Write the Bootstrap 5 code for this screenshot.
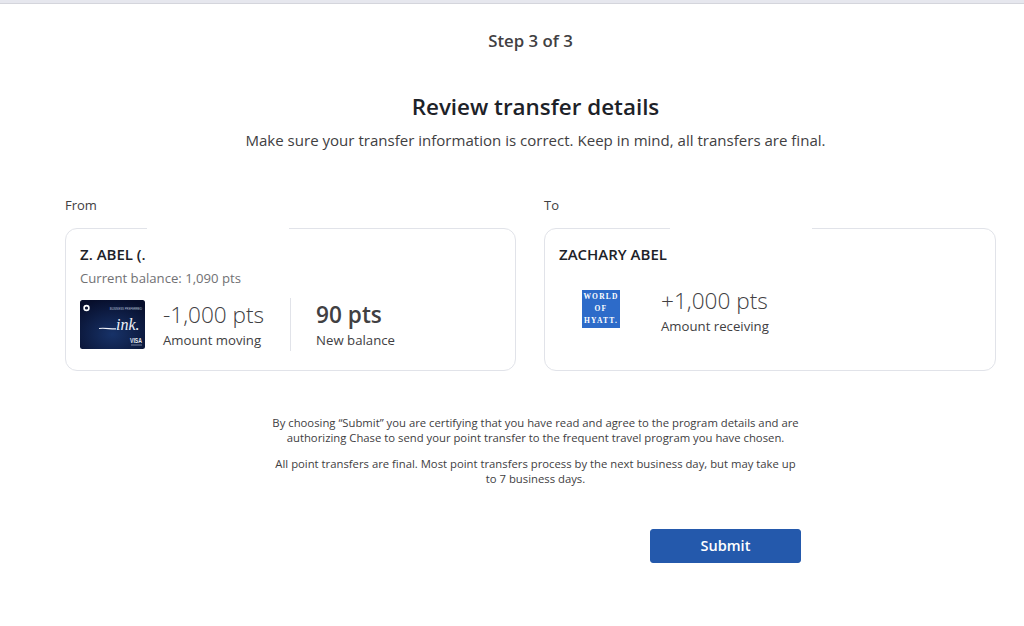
<!DOCTYPE html>
<html lang="en">
<head>
    <meta charset="UTF-8">
    <meta name="viewport" content="width=device-width, initial-scale=1.0">
    <title>Review transfer details</title>
    <link href="https://cdn.jsdelivr.net/npm/bootstrap@5.3.0/dist/css/bootstrap.min.css" rel="stylesheet">
    <style>
        body { font-family: "Open Sans", "Liberation Sans", sans-serif; color: #414042; background: #fff; }
        .top-strip { height: 4px; background: #e6e7ee; border-bottom: 1px solid #d4d5dc; }
        .page-wrap { padding: 26px 28px 0 65px; }
        .step-text { font-size: 16.8px; line-height: 22px; font-weight: 600; }
        .review-title { font-size: 22.4px; line-height: 30px; font-weight: 600; color: #1d2228; margin: 40px 0 0 10px; }
        .review-sub { font-size: 15.05px; line-height: 22px; margin: 7px 0 0 10px; }
        .cards-row { display: grid; grid-template-columns: 451px 452px; column-gap: 28px; margin-top: 45px; }
        .side-label { font-size: 13px; line-height: 18px; margin-bottom: 14px; }
        .transfer-box { position: relative; height: 143px; border: 1px solid #e1e3e9; border-radius: 12px; padding: 15px 14px; }
        .redact-patch { position: absolute; top: -2px; height: 4px; width: 142px; background: #fff; }
        .holder-name { font-size: 15px; line-height: 20px; font-weight: 600; color: #1d2228; }
        .balance-line { font-size: 13.15px; line-height: 18px; color: #717174; margin-top: 5px; }
        .amount-big { font-size: 22.6px; line-height: 30px; font-weight: 300; white-space: nowrap; }
        .amount-bold { font-weight: 600; }
        .amount-note { font-size: 13.2px; line-height: 18px; margin-top: 1px; white-space: nowrap; }
        .card-thumb { width: 65px; height: 49px; display: block; flex: none; }
        .amount-split { width: 1px; height: 53px; background: #e1e3e9; margin: 0 25px 0 26px; }
        .hyatt-logo { width: 38px; height: 38px; background: #2d6bc9; color: #fff; font-family: "Liberation Serif", serif; font-size: 7.5px; line-height: 12px; letter-spacing: 1.2px; font-weight: 700; }
        .receive-amount { margin: 4px 0 0 41px; }
        .legal-block { width: 534px; margin: 44px auto 0; font-size: 11.3px; line-height: 15px; text-align: center; position: relative; left: 5px; }
        .legal-block p { margin: 0 0 11px; }
        .submit-btn { width: 151px; height: 34px; padding: 0; background: #2459ac; border-color: #2459ac; border-radius: 3px; font-size: 14.5px; font-weight: 600; }
        .submit-row { width: 736px; margin-top: 43px; }
    </style>
</head>
<body>
    <div class="top-strip"></div>
    <div class="page-wrap">
        <div class="text-center step-text">Step 3 of 3</div>
        <h1 class="text-center review-title">Review transfer details</h1>
        <p class="text-center review-sub">Make sure your transfer information is correct. Keep in mind, all transfers are final.</p>

        <div class="cards-row">
            <div>
                <div class="side-label">From</div>
                <div class="transfer-box">
                    <div class="redact-patch" style="left: 81px"></div>
                    <div class="holder-name">Z. ABEL (.</div>
                    <div class="balance-line">Current balance: 1,090 pts</div>
                    <div class="d-flex align-items-center" style="margin-top: 11px">
                        <svg class="card-thumb" viewBox="0 0 65 49" role="img" aria-label="Ink business card">
                            <defs>
                                <radialGradient id="inkBg" cx="0.5" cy="0.7" r="0.75">
                                    <stop offset="0" stop-color="#173268"/>
                                    <stop offset="1" stop-color="#070e2b"/>
                                </radialGradient>
                            </defs>
                            <rect width="65" height="49" rx="2.5" fill="url(#inkBg)"/>
                            <circle cx="6.5" cy="8" r="2.4" fill="none" stroke="#fff" stroke-width="1.6"/>
                            <text x="62" y="9.5" text-anchor="end" font-family="Liberation Sans, sans-serif" font-size="2.8" fill="#b9c2d8">BUSINESS PREFERRED</text>
                            <path d="M19 28.5c6-.8 11 .6 17 .4" fill="none" stroke="#f2f4fa" stroke-width="1.1"/>
                            <text x="36" y="30" font-family="Liberation Serif, serif" font-style="italic" font-size="16" fill="#f2f4fa">ink.</text>
                            <text x="62" y="42.5" text-anchor="end" font-family="Liberation Sans, sans-serif" font-size="7" font-weight="700" fill="#e4e8f2" textLength="12" lengthAdjust="spacingAndGlyphs">VISA</text>
                            <path d="M51 45h11" stroke="#8e99b5" stroke-width=".8"/>
                        </svg>
                        <div style="margin-left: 18px">
                            <div class="amount-big">-1,000 pts</div>
                            <div class="amount-note">Amount moving</div>
                        </div>
                        <div class="amount-split"></div>
                        <div>
                            <div class="amount-big amount-bold">90 pts</div>
                            <div class="amount-note">New balance</div>
                        </div>
                    </div>
                </div>
            </div>
            <div>
                <div class="side-label">To</div>
                <div class="transfer-box">
                    <div class="redact-patch" style="left: 125px"></div>
                    <div class="holder-name">ZACHARY ABEL</div>
                    <div class="d-flex align-items-center" style="margin-top: 18px">
                        <div class="hyatt-logo d-flex flex-column align-items-center justify-content-center" style="margin-left: 23px">
                            <span>WORLD</span><span>OF</span><span>HYATT.</span>
                        </div>
                        <div class="receive-amount">
                            <div class="amount-big">+1,000 pts</div>
                            <div class="amount-note">Amount receiving</div>
                        </div>
                    </div>
                </div>
            </div>
        </div>

        <div class="legal-block">
            <p>By choosing “Submit” you are certifying that you have read and agree to the program details and are authorizing Chase to send your point transfer to the frequent travel program you have chosen.</p>
            <p>All point transfers are final. Most point transfers process by the next business day, but may take up to 7 business days.</p>
        </div>
        <div class="submit-row d-flex justify-content-end">
            <button class="btn btn-primary submit-btn">Submit</button>
        </div>
    </div>
</body>
</html>
